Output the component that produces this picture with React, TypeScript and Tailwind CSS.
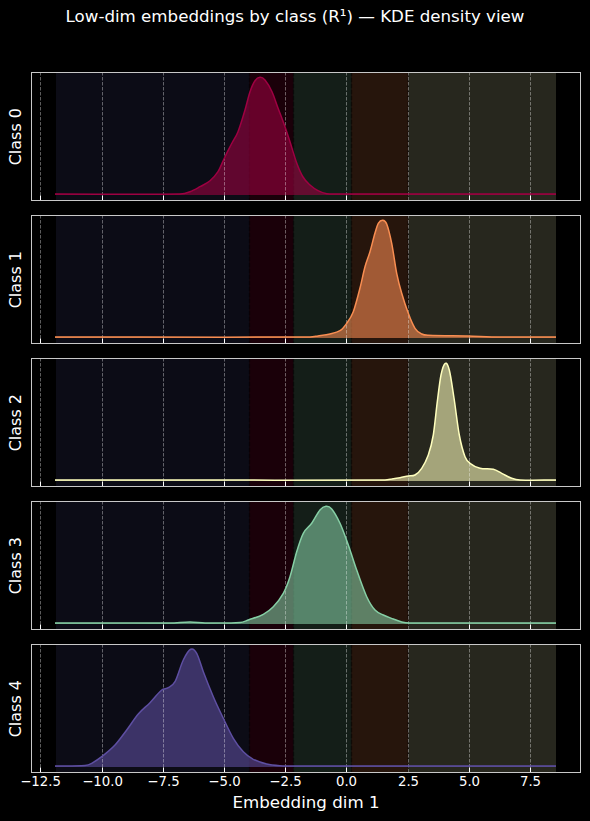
const ticks = [
  { x: 40.5, label: "−12.5" },
  { x: 102.5, label: "−10.0" },
  { x: 163.5, label: "−7.5" },
  { x: 224.5, label: "−5.0" },
  { x: 285.5, label: "−2.5" },
  { x: 346.5, label: "0.0" },
  { x: 408.5, label: "2.5" },
  { x: 469.5, label: "5.0" },
  { x: 530.5, label: "7.5" },
];

const bands = [
  { x: 56, w: 193.5, color: "#0c0c16" },
  { x: 249.5, w: 44, color: "#1a0009" },
  { x: 293.5, w: 58, color: "#141e18" },
  { x: 351.5, w: 57, color: "#26150c" },
  { x: 408.5, w: 147.5, color: "#27271e" },
];

type Pt = [number, number];

const panels: { name: string; top: number; base: number; color: string; pts: Pt[] }[] = [
  {
    name: "Class 0",
    top: 72,
    base: 195,
    color: "#9e0142",
    pts: [[55, 194], [180, 194], [190, 191.7], [200, 186.7], [210, 180.7], [218, 171.7], [225, 156.7], [232, 143], [238, 131.7], [245, 110], [250, 91.7], [255, 80.7], [260, 77.3], [265, 80], [272, 91.7], [278, 108], [284, 124], [290, 141.7], [296.7, 163], [303, 177], [310, 185], [318, 190.7], [326.7, 193.7], [340, 194], [556, 194]],
  },
  {
    name: "Class 1",
    top: 215,
    base: 338,
    color: "#f98e52",
    pts: [[55, 337], [310, 337], [318, 336], [330, 334], [340, 330.7], [346.7, 323.3], [353.3, 311.7], [360, 288], [365, 266.7], [370, 251.7], [375, 233], [378.3, 223.3], [382.7, 220.3], [386.7, 224], [391.7, 243.3], [396.7, 273.3], [401.7, 293.3], [408.3, 313.3], [415, 328.3], [421.7, 334], [428.3, 335.3], [468, 336], [500, 337], [556, 337]],
  },
  {
    name: "Class 2",
    top: 358,
    base: 481,
    color: "#ffffbe",
    pts: [[55, 480], [385, 480], [392, 479], [400, 477.7], [408.3, 476], [415, 475], [421.7, 468.3], [428.3, 455], [433.3, 435], [437.3, 401.7], [441, 375], [445.3, 363.3], [449.3, 370], [454, 398], [459.3, 435], [465, 456.7], [470, 463.3], [480, 468.3], [493.3, 469.3], [501.7, 473.3], [511.7, 478.3], [520, 480], [556, 480]],
  },
  {
    name: "Class 3",
    top: 501,
    base: 624,
    color: "#86cfa5",
    pts: [[55, 623], [170, 623], [190, 622], [205, 623], [240, 622.6], [248.3, 620], [263.3, 614.3], [273.3, 606.7], [283.3, 593.3], [290, 576.7], [296.7, 551.7], [303.3, 533.3], [311.7, 523.3], [320, 510], [326, 506.3], [331.7, 509], [340, 523.3], [348.3, 545], [356.7, 570], [366.7, 596.7], [375, 610], [383.3, 615], [393.3, 619], [401.7, 622], [410, 623], [556, 623]],
  },
  {
    name: "Class 4",
    top: 644,
    base: 767,
    color: "#5e4fa2",
    pts: [[55, 766], [85, 765.5], [91.7, 763.3], [101.7, 756.7], [115, 745], [126.7, 730], [138.3, 714], [150, 702.7], [161.7, 690], [168.3, 687.7], [175, 681.7], [183.3, 660], [190.7, 649.3], [196.7, 653.3], [203.3, 671.7], [213.3, 696.7], [223.3, 718.3], [233.3, 738.3], [243.3, 751.7], [253.3, 759.3], [266.7, 764], [280, 765.7], [300, 766], [556, 766]],
  },
];

// cubic hermite through the traced points
function smooth(pts: Pt[]) {
  const slope = (i: number) => {
    const a = pts[Math.max(i - 1, 0)];
    const b = pts[Math.min(i + 1, pts.length - 1)];
    return (b[1] - a[1]) / (b[0] - a[0]);
  };
  let d = `M${pts[0][0]} ${pts[0][1]}`;
  for (let i = 0; i < pts.length - 1; i++) {
    const [x1, y1] = pts[i];
    const [x2, y2] = pts[i + 1];
    const dx = (x2 - x1) / 3;
    d += ` C${(x1 + dx).toFixed(1)} ${(y1 + slope(i) * dx).toFixed(1)} ${(x2 - dx).toFixed(1)} ${(y2 - slope(i + 1) * dx).toFixed(1)} ${x2} ${y2}`;
  }
  return d;
}

function Panel({ name, top, base, color, pts }: (typeof panels)[number]) {
  const line = smooth(pts);
  const bottom = top + 128.5;
  return (
    <div className="flex h-[129px] items-center">
      <div className="flex w-[31px] justify-center">
        <span className="rotate-180 text-[16px] leading-none text-white [writing-mode:vertical-rl]">{name}</span>
      </div>
      <svg width="550" height="129" viewBox={`31 ${top} 550 129`} className="block">
        {bands.map((b) => (
          <rect key={b.x} x={b.x} y={top} width={b.w} height={129} fill={b.color} />
        ))}
        {[249.5, 293.5, 351.5, 408].map((x) => (
          <line key={x} x1={x} x2={x} y1={top} y2={bottom} stroke="#000" strokeOpacity="0.35" strokeWidth="1.5" strokeDasharray="4 2" />
        ))}
        <path d={`${line} L556 ${base} L55 ${base} Z`} fill={color} fillOpacity="0.58" />
        {ticks.map((t) => (
          <g key={t.x}>
            <line x1={t.x} x2={t.x} y1={top} y2={bottom} stroke="#fff" strokeOpacity="0.4" strokeWidth="0.9" strokeDasharray="3.5 1.5" />
            {t.label !== "2.5" && <line x1={t.x} x2={t.x} y1={bottom - 5} y2={bottom} stroke="#fff" strokeWidth="1" />}
          </g>
        ))}
        <path d={line} fill="none" stroke={color} strokeWidth="1.5" />
        <rect x="31.5" y={top + 0.5} width="549" height="128" fill="none" stroke="#c8c8c8" strokeWidth="1" />
      </svg>
    </div>
  );
}

export default function App() {
  return (
    <div className="flex h-[821px] w-[590px] flex-col overflow-hidden bg-black text-white [font-family:'DejaVu_Sans',sans-serif]">
      <div className="flex h-[72px] justify-center pt-[8px] text-[16.67px] leading-[18px]">
        Low-dim embeddings by class (R¹) — KDE density view
      </div>
      <div className="flex flex-col gap-[14px]">
        {panels.map((p) => (
          <Panel key={p.name} {...p} />
        ))}
      </div>
      <svg width="590" height="20" viewBox="0 773 590 20" className="block shrink-0">
        {ticks.map((t) => (
          <text key={t.label} x={t.x} y="786" textAnchor="middle" fontSize="13.3" fill="#fff">
            {t.label}
          </text>
        ))}
      </svg>
      <div className="pl-[22px] text-center text-[16.67px] leading-[20px]">Embedding dim 1</div>
    </div>
  );
}
